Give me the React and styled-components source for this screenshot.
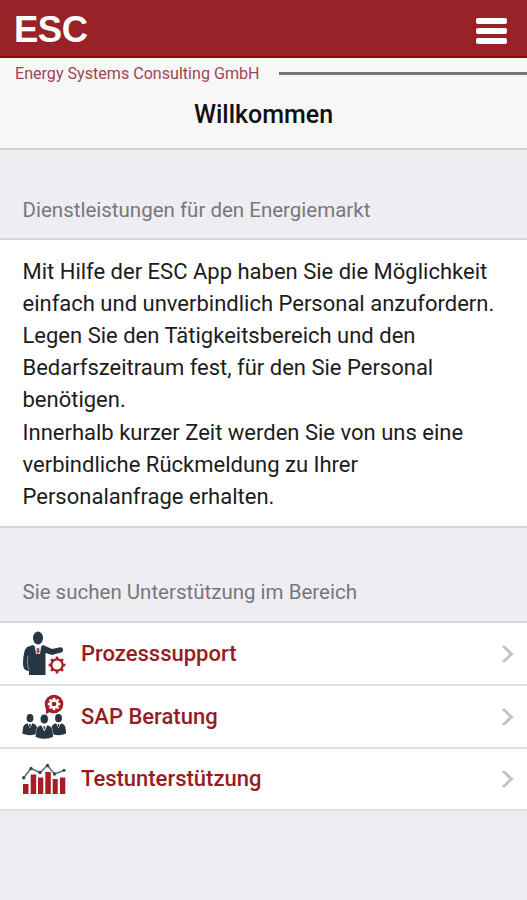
import React from "react";
import styled, { createGlobalStyle } from "styled-components";

const GlobalStyle = createGlobalStyle`
  * { box-sizing: border-box; }
  body { margin: 0; background: #eeedf2; font-family: Roboto, sans-serif; }
`;

const Screen = styled.div`
  height: 900px;
  overflow: hidden;
  background: #eeedf2;
`;

const TopBar = styled.header`
  display: flex;
  justify-content: space-between;
  align-items: center;
  height: 58px;
  padding: 0 20px 0 14px;
  background: #982228;
  border-bottom: 2px solid #8c0c12;
`;

const Logo = styled.div`
  padding-top: 3px;
  font: bold 36.5px/56px "Liberation Sans", sans-serif;
  letter-spacing: -0.5px;
  color: #fff;
`;

const MenuButton = styled.button`
  display: flex;
  flex-direction: column;
  gap: 4px;
  margin-top: 5px;
  padding: 0;
  border: 0;
  background: none;
`;

const MenuBar = styled.span`
  width: 31px;
  height: 6px;
  border-radius: 2px;
  background: #fff;
`;

const TitleBar = styled.div`
  height: 92px;
  background: #f7f7f7;
  border-bottom: 2px solid #d0d0d3;
`;

const Company = styled.div`
  display: flex;
  align-items: center;
  gap: 19px;
  height: 31px;
  padding-left: 15px;
  font-size: 16.1px;
  color: #a34355;
  white-space: nowrap;
`;

const Rule = styled.span`
  flex: 1;
  height: 3px;
  background: #757575;
`;

const PageTitle = styled.h1`
  margin: 10px 0 0;
  font-size: 25px;
  font-weight: 500;
  line-height: 32px;
  text-align: center;
  color: #111;
`;

const SectionTitle = styled.h2`
  height: ${(p) => p.$height};
  margin: 0;
  padding: ${(p) => p.$top} 0 0 22.5px;
  font-size: 20.5px;
  font-weight: 400;
  line-height: 24px;
  color: #78777c;
`;

const Intro = styled.p`
  height: 290px;
  margin: 0;
  padding: 15.6px 0 0 22.5px;
  border: solid #d5d5d8;
  border-width: 2px 0;
  background: #fff;
  font-size: 22px;
  line-height: 32.2px;
  color: #1c1c1c;
  white-space: nowrap;
`;

const List = styled.ul`
  margin: 0;
  padding: 0;
  list-style: none;
  border-top: 2px solid #d5d5d8;
`;

const Row = styled.li`
  display: flex;
  align-items: center;
  height: ${(p) => p.$height};
  padding: 0 13px 0 22px;
  background: #fff;
  border-bottom: 2px solid #dfdfe0;
`;

const Label = styled.span`
  flex: 1;
  margin-left: 15px;
  font-size: 22px;
  font-weight: 500;
  line-height: 28px;
  color: #971b23;
`;

const Icon = styled.svg`
  display: block;
  flex: none;
`;

const Gear = ({ x, y, r, color, teeth }) => (
  <g transform={`translate(${x} ${y})`} stroke={color} fill="none">
    <circle r={r} strokeWidth="2.3" />
    {Array.from({ length: teeth }, (_, i) => (
      <path key={i} d={`M0 ${-r - 0.5}v-2.2`} strokeWidth="2.6" transform={`rotate(${(i * 360) / teeth})`} />
    ))}
  </g>
);

const SupportIcon = () => (
  <Icon width="44" height="46" viewBox="0 0 44 46">
    <ellipse cx="16" cy="7" rx="5" ry="6.5" fill="#263642" />
    <path d="M11 14 16 18 21 14 30 18 37 16.5Q41 15.5 41 19 41 21.5 37 22L30 24 23.5 22 23.5 44H7V40Q1 40 1 33 1 20 5 16Z" fill="#263642" />
    <path d="M6 25Q4 32 7 39" fill="none" stroke="#8292a0" strokeWidth="1" />
    <path d="M12.5 14 16 18.5 19.5 14 18 23H14Z" fill="#eee" />
    <path d="m15 17 2 0 .7 4-1.7 2-1.7-2Z" fill="#b74b52" />
    <Gear x={35} y={34} r={5.7} color="#a51d25" teeth={8} />
  </Icon>
);

const Person = ({ transform }) => (
  <g transform={transform} fill="#263642">
    <ellipse cy="-11" rx="4" ry="4.8" />
    <path d="M-9 7-8-1Q-7-4-3-5L0 1 3-5Q7-4 8-1L9 7Q0 11-9 7Z" />
    <path d="M-1.1-4h2.2L.7-.5H-.7Z" />
  </g>
);

const ConsultingIcon = () => (
  <Icon width="44" height="46" viewBox="0 0 44 46">
    <Person transform="translate(8 33.5) scale(.85)" />
    <Person transform="translate(36.5 33.5) scale(.85)" />
    <g stroke="#fff" strokeWidth=".4"><Person transform="translate(22.3 36)" /></g>
    <circle cx="32" cy="10" r="9.3" fill="#a51d25" />
    <path d="M24 13v7l6-3Z" fill="#a51d25" />
    <Gear x={32} y={10} r={3.5} color="#fff" teeth={8} />
  </Icon>
);

const ChartIcon = () => (
  <Icon width="44" height="46" viewBox="0 0 44 46">
    <path d="M1 28h5.5v10H1zM8.7 18.5h5.5V38H8.7zM16 21.5h5.3V38H16zM23.3 16h5.5v22h-5.5zM30.7 23h5v15h-5zM38 21.5h5.3V38H38z" fill="#a51d25" />
    <path d="M1.5 22 9 12.5 18 16.5 25.5 9.5 32.5 18 43 14" fill="none" stroke="#68757d" strokeWidth="1.7" />
    <g fill="#344550">
      <circle cx="1.7" cy="21.7" r="1.7" /><circle cx="9" cy="12.5" r="1.7" /><circle cx="18" cy="16.5" r="1.7" />
      <circle cx="25.5" cy="9.5" r="1.7" /><circle cx="32.5" cy="18" r="1.7" /><circle cx="42" cy="14.3" r="1.5" />
    </g>
  </Icon>
);

const Chevron = () => (
  <Icon width="13" height="20" viewBox="0 0 13 20">
    <path d="m2 2 8.5 8L2 18" fill="none" stroke="#c4c4c6" strokeWidth="3" />
  </Icon>
);

const services = [
  { name: "Prozesssupport", Art: SupportIcon, height: "63px" },
  { name: "SAP Beratung", Art: ConsultingIcon, height: "63px" },
  { name: "Testunterstützung", Art: ChartIcon, height: "62px" },
];

export default function App() {
  return (
    <Screen>
      <GlobalStyle />
      <TopBar>
        <Logo>ESC</Logo>
        <MenuButton aria-label="Menü"><MenuBar /><MenuBar /><MenuBar /></MenuButton>
      </TopBar>
      <TitleBar>
        <Company>Energy Systems Consulting GmbH<Rule /></Company>
        <PageTitle>Willkommen</PageTitle>
      </TitleBar>
      <SectionTitle $height="88px" $top="48px">Dienstleistungen für den Energiemarkt</SectionTitle>
      <Intro>
        Mit Hilfe der ESC App haben Sie die Möglichkeit<br />
        einfach und unverbindlich Personal anzufordern.<br />
        Legen Sie den Tätigkeitsbereich und den<br />
        Bedarfszeitraum fest, für den Sie Personal<br />
        benötigen.<br />
        Innerhalb kurzer Zeit werden Sie von uns eine<br />
        verbindliche Rückmeldung zu Ihrer<br />
        Personalanfrage erhalten.
      </Intro>
      <SectionTitle $height="93px" $top="52px">Sie suchen Unterstützung im Bereich</SectionTitle>
      <List>
        {services.map(({ name, Art, height }) => (
          <Row key={name} $height={height}>
            <Art />
            <Label>{name}</Label>
            <Chevron />
          </Row>
        ))}
      </List>
    </Screen>
  );
}
